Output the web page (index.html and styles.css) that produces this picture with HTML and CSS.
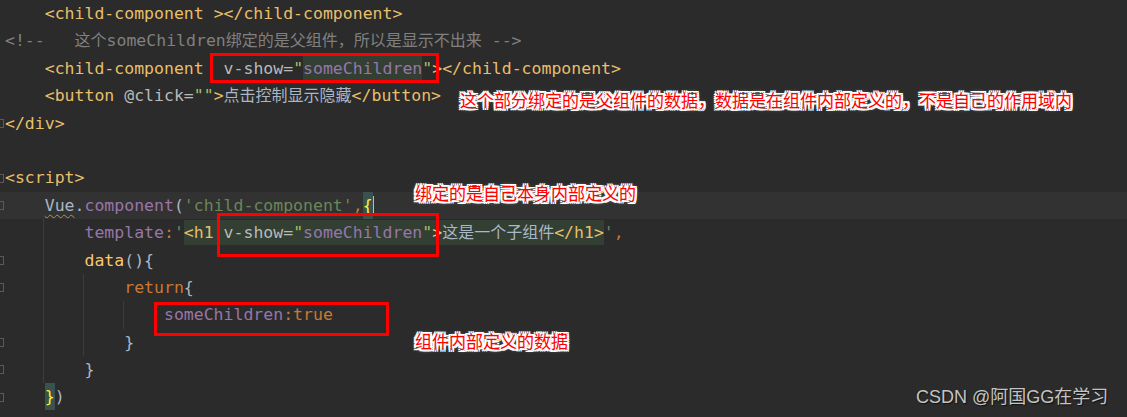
FILE: index.html
```html
<!DOCTYPE html>
<html>
<head>
<meta charset="utf-8">
<link rel="stylesheet" href="styles.css">
</head>
<body>
<div class="editor">
    <div class="ln"><span class="gut"></span><span class="code">    <span class="t">&lt;child-component &gt;&lt;/child-component&gt;</span></span></div>
    <div class="ln"><span class="gut"></span><span class="code"><span class="c">&lt;!--   <span class="cn">这个</span>someChildren<span class="cn">绑定的是父组件，所以是显示不出来</span> --&gt;</span></span></div>
    <div class="ln"><span class="gut"></span><span class="code">    <span class="t">&lt;child-component</span>  <span class="a">v-show=</span><span class="v">"</span><span class="p inj">someChildren</span><span class="v">"</span><span class="t">&gt;&lt;/child-component&gt;</span></span></div>
    <div class="ln"><span class="gut"></span><span class="code">    <span class="t">&lt;button</span> <span class="a">@click=</span><span class="v">""</span><span class="t">&gt;</span><span class="x cn">点击控制显示隐藏</span><span class="t">&lt;/button&gt;</span></span></div>
    <div class="ln"><span class="gut"><span class="fold"></span></span><span class="code"><span class="t">&lt;/div&gt;</span></span></div>
    <div class="ln"><span class="gut"></span><span class="code"></span></div>
    <div class="ln"><span class="gut"><span class="fold"></span></span><span class="code"><span class="t">&lt;script&gt;</span></span></div>
    <div class="ln cur"><span class="gut"><span class="fold"></span></span><span class="code">    <span class="x wavy">Vue</span><span class="x">.</span><span class="p">component</span><span class="x">(</span><span class="s">'child-component'</span><span class="k">,</span><span class="brace">{</span><span class="caret"></span></span></div>
    <div class="ln g1"><span class="gut"></span><span class="code">        <span class="p">template</span><span class="k">:</span><span class="s">'</span><span class="inj"><span class="t">&lt;h1</span> <span class="a">v-show=</span><span class="v">"</span><span class="p">someChildren</span><span class="v">"</span><span class="t">&gt;</span><span class="x cn">这是一个子组件</span><span class="t">&lt;/h1&gt;</span></span><span class="s">'</span><span class="k">,</span></span></div>
    <div class="ln g1"><span class="gut"><span class="fold"></span></span><span class="code">        <span class="f">data</span><span class="x">(){</span></span></div>
    <div class="ln g2"><span class="gut"><span class="fold"></span></span><span class="code">            <span class="k">return</span><span class="x">{</span></span></div>
    <div class="ln g3"><span class="gut"></span><span class="code">                <span class="p">someChildren</span><span class="k">:true</span></span></div>
    <div class="ln g2"><span class="gut"><span class="fold"></span></span><span class="code">            <span class="x">}</span></span></div>
    <div class="ln g1"><span class="gut"><span class="fold"></span></span><span class="code">        <span class="x">}</span></span></div>
    <div class="ln"><span class="gut"><span class="fold"></span></span><span class="code">    <span class="brace">}</span><span class="x">)</span></span></div>

    <div class="box box-1"></div>
    <div class="box box-2"></div>
    <div class="box box-3"></div>

    <div class="note note-1">这个部分绑定的是父组件的数据，数据是在组件内部定义的，不是自己的作用域内</div>
    <div class="note note-2">绑定的是自己本身内部定义的</div>
    <div class="note note-3">组件内部定义的数据</div>

    <div class="mark">CSDN @阿国GG在学习</div>
</div>
</body>
</html>
```

FILE: styles.css
```css
* {
    margin: 0;
    padding: 0;
    box-sizing: border-box;
}

body {
    background: #2b2b2b;
    overflow: hidden;
}

.editor {
    position: relative;
    width: 1127px;
    height: 417px;
    background: #2b2b2b;
    font-family: "DejaVu Sans Mono", "Noto Sans CJK SC", monospace;
    font-size: 16.5px;
    color: #a9b7c6;
}

.ln {
    display: flex;
    height: 27.4px;
    line-height: 27.4px;
}

.gut {
    flex: none;
    width: 5px;
    display: flex;
    align-items: center;
}

.fold {
    width: 4px;
    height: 9px;
    border: 1px solid #5a5a5a;
    border-left: none;
}

.code {
    white-space: pre;
}

.cur {
    background: #323232;
}

/* indent guides */
.g1 {
    background: linear-gradient(#3c3c3c, #3c3c3c) no-repeat 43px 0 / 1px 100%;
}

.g2 {
    background:
        linear-gradient(#3c3c3c, #3c3c3c) no-repeat 43px 0 / 1px 100%,
        linear-gradient(#3c3c3c, #3c3c3c) no-repeat 83px 0 / 1px 100%;
}

.g3 {
    background:
        linear-gradient(#3c3c3c, #3c3c3c) no-repeat 43px 0 / 1px 100%,
        linear-gradient(#3c3c3c, #3c3c3c) no-repeat 83px 0 / 1px 100%,
        linear-gradient(#3c3c3c, #3c3c3c) no-repeat 123px 0 / 1px 100%;
}

.cn {
    font-size: 16px;
}

.t { color: #e8bf6a; }
.a { color: #bababa; }
.v { color: #a5c261; }
.p { color: #9876aa; }
.c { color: #808080; }
.x { color: #a9b7c6; }
.s { color: #6a8759; }
.k { color: #cc7832; }
.f { color: #ffc66d; }

.inj {
    background: #333f33;
    padding: 3px 0;
}

.brace {
    color: #ffef28;
    background: #3b514d;
    padding: 4px 0;
}

.caret {
    display: inline-block;
    width: 1px;
    height: 20px;
    background: #bbbbbb;
    vertical-align: middle;
}

.wavy {
    text-decoration: underline wavy #a39c50;
    text-decoration-thickness: 1px;
    text-underline-offset: 3px;
}

.box {
    position: absolute;
    border: 3px solid #ff0000;
}

.box-1 { left: 210px; top: 53px; width: 229px; height: 30px; }
.box-2 { left: 217px; top: 213px; width: 222px; height: 44px; }
.box-3 { left: 154px; top: 302px; width: 235px; height: 34px; }

.note {
    position: absolute;
    font-family: "Noto Sans CJK SC", sans-serif;
    font-size: 17px;
    line-height: 20px;
    color: #ff0000;
    white-space: nowrap;
    text-shadow:
        -2px -2px 0 #fff, 2px -2px 0 #fff, -2px 2px 0 #fff, 2px 2px 0 #fff,
        0 -2px 0 #fff, 0 2px 0 #fff, -2px 0 0 #fff, 2px 0 0 #fff,
        0 0 4px #fff;
}

.note-1 { left: 460px; top: 90px; }
.note-2 { left: 415px; top: 183px; }
.note-3 { left: 415px; top: 331px; }

.mark {
    position: absolute;
    left: 916px;
    top: 386px;
    font-family: "Liberation Sans", "Noto Sans CJK SC", sans-serif;
    font-size: 18px;
    line-height: 22px;
    color: #c4c4c4;
    text-shadow: 1px 1px 1px #111;
    white-space: nowrap;
}
```
